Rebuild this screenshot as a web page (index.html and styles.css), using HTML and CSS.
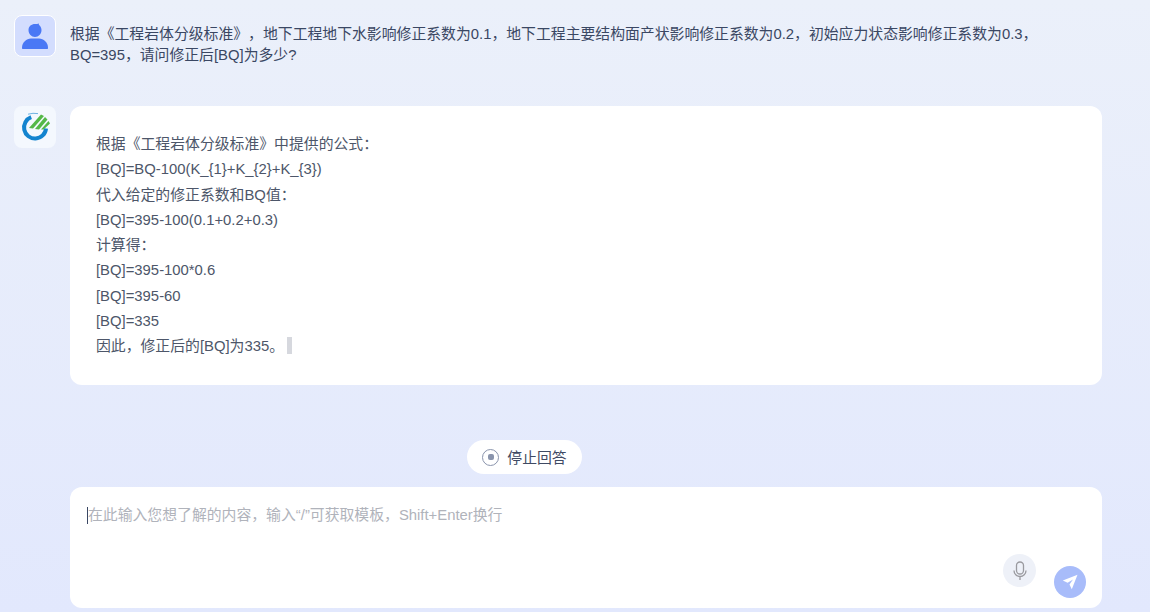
FILE: index.html
```html
<!DOCTYPE html>
<html lang="zh-CN">

<head>
    <meta charset="UTF-8">
    <title>问答</title>
    <link rel="stylesheet" href="styles.css">
</head>

<body>
    <div id="chat">
        <div class="row question-row">
            <div class="avatar user-avatar">
                <svg width="26" height="27" viewBox="0 0 26 27">
                    <path d="M13 1c1.500 0 2.600-.3 4-.6-.3 .8-.2 1.200 .4 1.800 1.300 1.300 2.100 3 2.100 4.900 0 3.900-3 7-6.500 7s-6.500-3.100-6.500-7S9.500 1 13 1z" fill="#4a78f5" />
                    <path d="M1 26c-.8 0-1-.6-1-1.300C0 19.500 4.500 15.500 9 15.500h8c4.500 0 9 4 9 9.200 0 .7-.2 1.300-1 1.300z" fill="#4a78f5" />
                </svg>
            </div>
            <p class="question">根据《工程岩体分级标准》，地下工程地下水影响修正系数为0.1，地下工程主要结构面产状影响修正系数为0.2，初始应力状态影响修正系数为0.3，<br>BQ=395，请问修正后[BQ]为多少?</p>
        </div>

        <div class="row answer-row">
            <div class="avatar bot-avatar">
                <svg width="34" height="34" viewBox="0 0 34 34">
                    <path d="M13.200 7.200A11 11 0 1 0 28 18.500" fill="none" stroke="#1484cf" stroke-width="4" />
                    <path d="M10 4.200q5-1.500 10-.6" fill="none" stroke="#1484cf" stroke-width="1" opacity=".6" />
                    <path d="M11 18 23 4.500 26 6 15 18.500zM17 19 27 7l2.500 2.500L21 19.500zM23 19.500 30.500 11 32 13.500 25.500 19.500z" fill="#55b848" />
                </svg>
            </div>
            <div class="answer">
                <div>根据《工程岩体分级标准》中提供的公式：</div>
                <div>[BQ]=BQ-100(K_{1}+K_{2}+K_{3})</div>
                <div>代入给定的修正系数和BQ值：</div>
                <div>[BQ]=395-100(0.1+0.2+0.3)</div>
                <div>计算得：</div>
                <div>[BQ]=395-100*0.6</div>
                <div>[BQ]=395-60</div>
                <div>[BQ]=335</div>
                <div>因此，修正后的[BQ]为335。<span class="cursor"></span></div>
            </div>
        </div>
    </div>

    <div id="stop-bar">
        <button class="stop-btn">
            <span class="stop-icon"><span class="stop-dot"></span></span>
            停止回答
        </button>
    </div>

    <div id="input-box">
        <div class="placeholder"><span class="caret"></span>在此输入您想了解的内容，输入“/”可获取模板，Shift+Enter换行</div>
        <div class="actions">
            <div class="mic-btn">
                <svg width="14" height="20" viewBox="0 0 14 20">
                    <rect x="3.500" y="1" width="7" height="12" rx="3.500" fill="none" stroke="#9a9a9f" stroke-width="1.300" />
                    <path d="M1 9.500c0 3.500 2.700 6 6 6s6-2.500 6-6M7 15.500V19" fill="none" stroke="#9a9a9f" stroke-width="1.300" />
                </svg>
            </div>
            <div class="send-btn">
                <svg width="16" height="16" viewBox="0 0 16 16">
                    <path d="M15.500 .8 .8 6.500l4.800 2.300L11 5.500 7.500 10.500l2.300 4.800z" fill="#fff" />
                </svg>
            </div>
        </div>
    </div>
</body>

</html>
```

FILE: styles.css
```css
html,
body {
    height: 100%;
}

body {
    margin: 0;
    height: 612px;
    overflow: hidden;
    box-sizing: border-box;
    padding: 15px 48px 4px 14px;
    display: flex;
    flex-direction: column;
    font-family: "Liberation Sans", "Noto Sans CJK SC", sans-serif;
    font-size: 14.850px;
    text-spacing-trim: space-all;
    color: #3f4a63;
    background: linear-gradient(180deg, #ebf0fa 0%, #e2e8fd 100%);
}

#chat {
    flex: 1;
    display: flex;
    flex-direction: column;
}

.row {
    display: flex;
    gap: 14px;
}

.avatar {
    flex: none;
    width: 42px;
    height: 42px;
    box-sizing: border-box;
    border-radius: 8px;
    display: flex;
    align-items: center;
    justify-content: center;
}

.user-avatar {
    background-color: #d3ddfe;
    border: 1.500px solid #fff;
}

.bot-avatar {
    background-color: #f4f8fe;
}

.question {
    margin: 9px 0 0;
    line-height: 21px;
    color: #3a4763;
}

.answer-row {
    margin-top: 40px;
}

.answer {
    flex: 1;
    box-sizing: border-box;
    height: 279px;
    padding: 26px 26px;
    background-color: #fff;
    border-radius: 12px;
    line-height: 25.250px;
    color: #4d5669;
}

.cursor {
    display: inline-block;
    width: 5px;
    height: 17px;
    margin-left: 3px;
    vertical-align: -3px;
    background-color: #d6d8de;
}

#stop-bar {
    display: flex;
    justify-content: center;
    margin-bottom: 13px;
    padding-right: 67px;
}

.stop-btn {
    width: 115px;
    height: 34px;
    padding: 0 0 2px;
    border: none;
    border-radius: 17px;
    background-color: #fff;
    display: flex;
    align-items: center;
    justify-content: center;
    gap: 8px;
    font-family: inherit;
    font-size: 14.850px;
    color: #3f4a63;
}

.stop-icon {
    width: 17px;
    height: 17px;
    margin-top: 2px;
    box-sizing: border-box;
    border: 1.500px solid #8a94ac;
    border-radius: 50%;
    display: flex;
    align-items: center;
    justify-content: center;
}

.stop-dot {
    width: 6px;
    height: 6px;
    border-radius: 2px;
    background-color: #8a94ac;
}

#input-box {
    position: relative;
    margin-left: 56px;
    height: 121px;
    box-sizing: border-box;
    padding: 18px 17px;
    background-color: #fff;
    border-radius: 12px;
}

.placeholder {
    display: flex;
    align-items: center;
    line-height: 20px;
    color: #b0b3bb;
}

.caret {
    width: 1px;
    height: 17px;
    background-color: #3a4763;
}

.actions {
    position: absolute;
    right: 16px;
    bottom: 10px;
    display: flex;
    align-items: flex-end;
    gap: 18px;
}

.mic-btn {
    width: 33px;
    height: 33px;
    margin-bottom: 11px;
    border-radius: 50%;
    background-color: #eef1f8;
    display: flex;
    align-items: center;
    justify-content: center;
}

.send-btn {
    width: 32px;
    height: 32px;
    border-radius: 50%;
    background-color: #a8bcfa;
    display: flex;
    align-items: center;
    justify-content: center;
}
```
